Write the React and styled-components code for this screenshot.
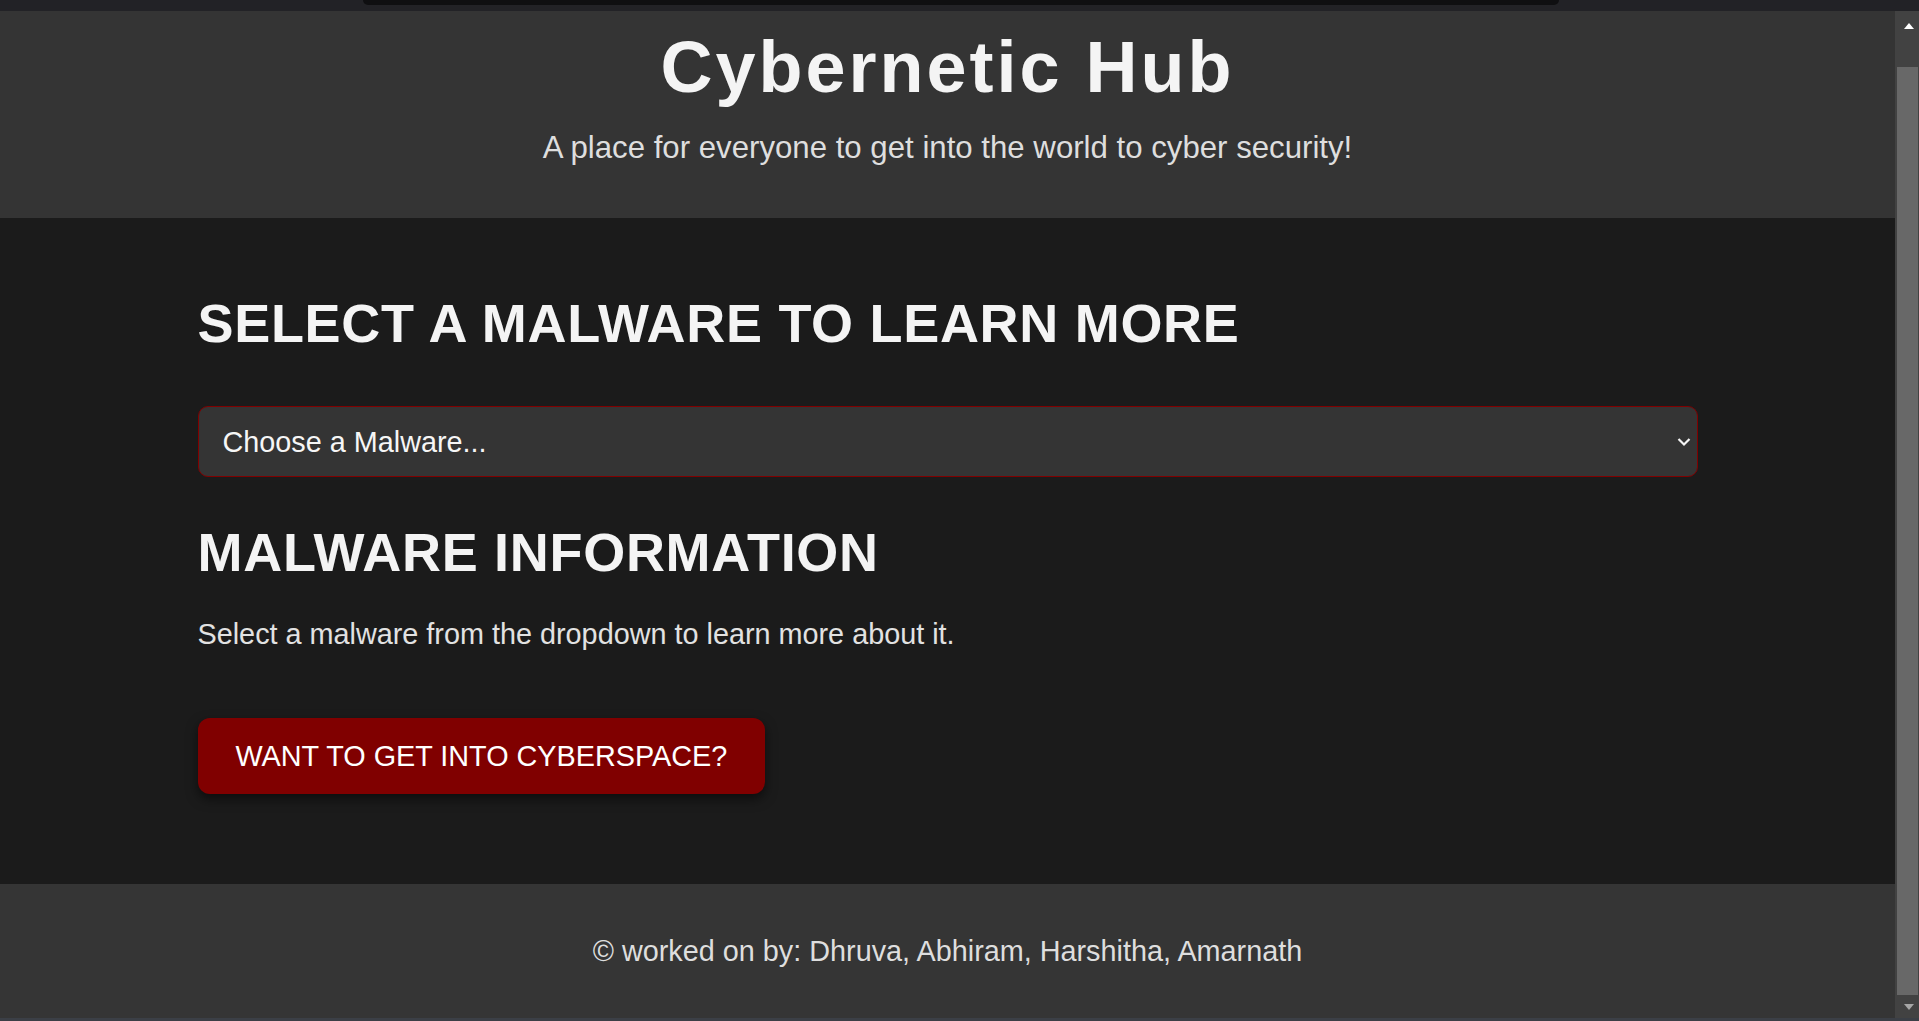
import React from "react";
import styled, { createGlobalStyle } from "styled-components";

const GlobalStyle = createGlobalStyle`
  html, body {
    margin: 0;
    padding: 0;
    height: 100%;
    overflow: hidden;
    background: #1b1b1b;
  }
  #root { height: 100%; }
  *, *::before, *::after { box-sizing: border-box; }
`;

const Frame = styled.div`
  display: flex;
  flex-direction: column;
  height: 100vh;
  font-family: "Liberation Sans", Arial, Helvetica, sans-serif;
  color: #f4f4f4;
`;

const TopStrip = styled.div`
  flex: none;
  height: 11px;
  background: #222226;
  display: flex;
  justify-content: center;
`;

const Notch = styled.div`
  width: 1196px;
  height: 5px;
  margin-left: 3px;
  background: #0f0f11;
  border-radius: 0 0 7px 7px;
`;

const BodyRow = styled.div`
  flex: 1;
  min-height: 0;
  display: flex;
`;

const Page = styled.div`
  flex: 1;
  min-width: 0;
  display: flex;
  flex-direction: column;
`;

const Header = styled.header`
  flex: none;
  background: #343434;
  padding: 16px 20px 52px;
  text-align: center;
`;

const Title = styled.h1`
  margin: 0;
  font-size: 72px;
  line-height: 80px;
  font-weight: 700;
  letter-spacing: 3px;
  color: #f4f4f4;
`;

const Tagline = styled.p`
  margin: 23px 0 0;
  font-size: 31.2px;
  line-height: 36px;
  color: #dedede;
`;

const Main = styled.main`
  flex: 1;
  background: #1b1b1b;
`;

const Container = styled.div`
  width: 1500px;
  margin: 0 auto;
  padding-top: 74px;
  display: flex;
  flex-direction: column;
  align-items: flex-start;
`;

const SectionTitle = styled.h2`
  margin: ${(p) => p.$top || 0}px 0 0;
  font-size: 54px;
  line-height: 62px;
  font-weight: 700;
  letter-spacing: 0.7px;
  text-transform: uppercase;
  color: #f4f4f4;
`;

const SelectWrap = styled.div`
  position: relative;
  width: 100%;
  margin-top: 52px;
`;

const MalwareSelect = styled.select`
  appearance: none;
  -webkit-appearance: none;
  display: block;
  width: 100%;
  height: 71px;
  padding: 0 40px 0 24px;
  background: #343434;
  color: #f6f6f6;
  border: 1px solid #800000;
  border-radius: 10px;
  font-family: "Liberation Sans", Arial, Helvetica, sans-serif;
  font-size: 28.8px;
  outline: none;
`;

const Chevron = styled.svg`
  position: absolute;
  right: 7px;
  top: 50%;
  transform: translateY(-50%);
  pointer-events: none;
`;

const InfoText = styled.p`
  margin: 34px 0 0;
  font-size: 28.8px;
  line-height: 34px;
  color: #e2e2e2;
`;

const CtaButton = styled.button`
  margin-top: 67px;
  height: 76px;
  padding: 0 38px;
  background: #800000;
  color: #ffffff;
  border: none;
  border-radius: 12px;
  font-family: "Liberation Sans", Arial, Helvetica, sans-serif;
  font-size: 28.8px;
  text-transform: uppercase;
  box-shadow: 0 5px 12px rgba(0, 0, 0, 0.55);
  cursor: pointer;
`;

const Footer = styled.footer`
  flex: none;
  background: #353535;
  padding: 50px 20px;
  text-align: center;
  font-size: 28.8px;
  line-height: 34px;
  color: #dedede;
`;

const Scrollbar = styled.div`
  flex: none;
  width: 24px;
  background: #424242;
  display: flex;
  flex-direction: column;
`;

const ArrowBox = styled.div`
  flex: none;
  height: ${(p) => p.$h}px;
  padding-top: ${(p) => p.$pt}px;
  display: flex;
  justify-content: center;
  padding-left: 3px;
`;

const Triangle = styled.div`
  width: 0;
  height: 0;
  border-left: 5.5px solid transparent;
  border-right: 5.5px solid transparent;
  ${(p) =>
    p.$up
      ? `border-bottom: 6px solid #ffffff;`
      : `border-top: 6px solid #a6a6a6;`}
`;

const Thumb = styled.div`
  flex: none;
  margin: 32px 1px 0 2px;
  height: 928px;
  background: #686868;
`;

const TrackRest = styled.div`
  flex: 1;
`;

const BottomStrip = styled.div`
  flex: none;
  height: 3px;
  background: #3b3f46;
`;

export default function App() {
  return (
    <>
      <GlobalStyle />
      <Frame>
        <TopStrip>
          <Notch />
        </TopStrip>
        <BodyRow>
          <Page>
            <Header>
              <Title>Cybernetic Hub</Title>
              <Tagline>A place for everyone to get into the world to cyber security!</Tagline>
            </Header>
            <Main>
              <Container>
                <SectionTitle>Select a Malware to Learn More</SectionTitle>
                <SelectWrap>
                  <MalwareSelect defaultValue="">
                    <option value="">Choose a Malware...</option>
                    <option value="virus">Virus</option>
                    <option value="worm">Worm</option>
                    <option value="trojan">Trojan</option>
                    <option value="ransomware">Ransomware</option>
                    <option value="spyware">Spyware</option>
                  </MalwareSelect>
                  <Chevron width="14" height="9" viewBox="0 0 14 9">
                    <polyline
                      points="1.5,1.5 7,7 12.5,1.5"
                      fill="none"
                      stroke="#f4f4f4"
                      strokeWidth="2.2"
                    />
                  </Chevron>
                </SelectWrap>
                <SectionTitle $top={44}>Malware Information</SectionTitle>
                <InfoText>Select a malware from the dropdown to learn more about it.</InfoText>
                <CtaButton>Want to get into Cyberspace?</CtaButton>
              </Container>
            </Main>
            <Footer>© worked on by: Dhruva, Abhiram, Harshitha, Amarnath</Footer>
          </Page>
          <Scrollbar>
            <ArrowBox $h={24} $pt={12}>
              <Triangle $up />
            </ArrowBox>
            <Thumb />
            <TrackRest />
            <ArrowBox $h={17} $pt={3}>
              <Triangle />
            </ArrowBox>
          </Scrollbar>
        </BodyRow>
        <BottomStrip />
      </Frame>
    </>
  );
}
